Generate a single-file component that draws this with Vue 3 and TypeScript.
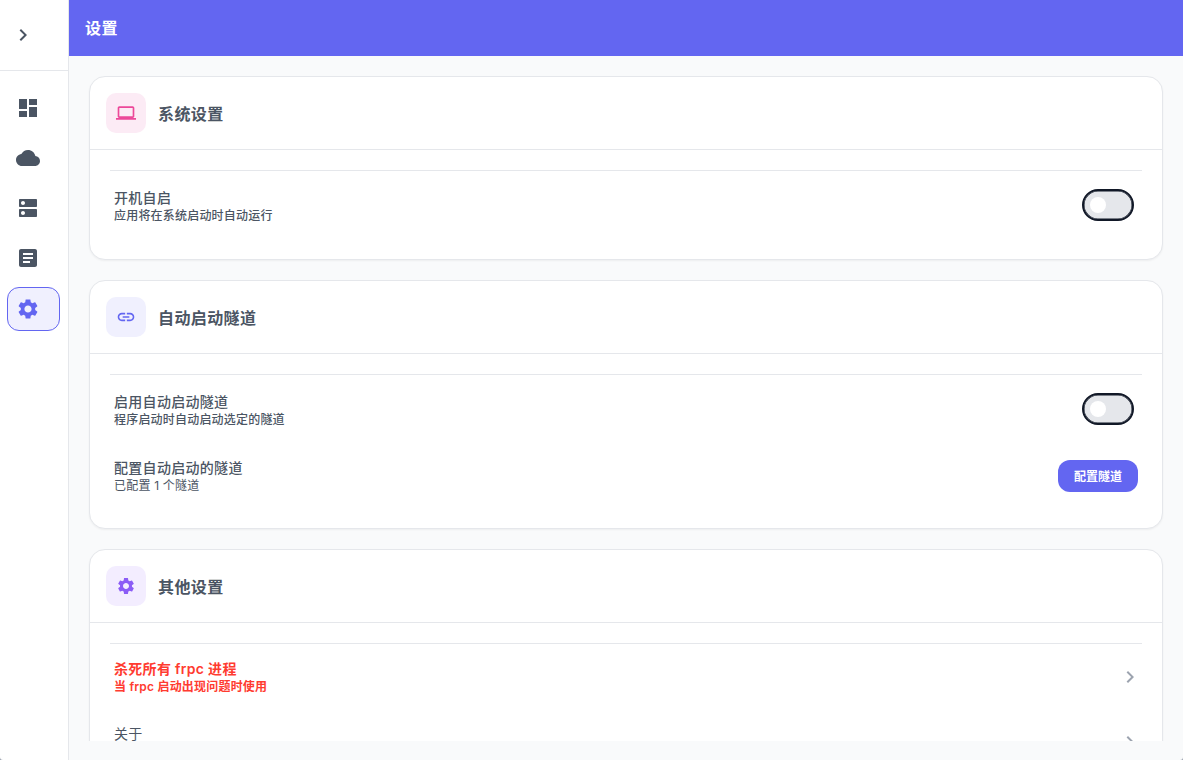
<template>
  <div class="app">
    <aside class="sidebar">
      <div class="side-top">
        <button class="collapse">
          <svg class="icon" viewBox="0 0 24 24"><path :d="icons.chevron" /></svg>
        </button>
      </div>
      <nav class="nav">
        <a
          v-for="item in navItems"
          :key="item.name"
          :class="['nav-item', { active: item.name === 'settings' }]"
        >
          <svg class="icon" viewBox="0 0 24 24"><path :d="item.path" /></svg>
        </a>
      </nav>
    </aside>

    <main class="main">
      <header class="topbar">设置</header>
      <div class="scroller">
        <section class="card">
          <div class="card-head">
            <span class="badge pink">
              <svg viewBox="0 0 24 24"><path :d="icons.laptop" /></svg>
            </span>
            <h2>系统设置</h2>
          </div>
          <div class="card-body">
            <div class="list">
              <div class="row">
                <div class="label">
                  <span class="title">开机自启</span>
                  <span class="desc strong">应用将在系统启动时自动运行</span>
                </div>
                <span class="toggle"><i></i></span>
              </div>
            </div>
          </div>
        </section>

        <section class="card">
          <div class="card-head">
            <span class="badge indigo">
              <svg viewBox="0 0 24 24"><path :d="icons.link" /></svg>
            </span>
            <h2>自动启动隧道</h2>
          </div>
          <div class="card-body">
            <div class="list">
              <div class="row">
                <div class="label">
                  <span class="title">启用自动启动隧道</span>
                  <span class="desc strong">程序启动时自动启动选定的隧道</span>
                </div>
                <span class="toggle"><i></i></span>
              </div>
              <div class="row slim">
                <div class="label">
                  <span class="title">配置自动启动的隧道</span>
                  <span class="desc">已配置 {{ tunnelCount }} 个隧道</span>
                </div>
                <button class="primary">配置隧道</button>
              </div>
            </div>
          </div>
        </section>

        <section class="card">
          <div class="card-head">
            <span class="badge purple">
              <svg viewBox="0 0 24 24"><path :d="icons.gear" /></svg>
            </span>
            <h2>其他设置</h2>
          </div>
          <div class="card-body">
            <div class="list">
              <div class="row slim danger">
                <div class="label">
                  <span class="title">杀死所有 frpc 进程</span>
                  <span class="desc strong">当 frpc 启动出现问题时使用</span>
                </div>
                <svg class="arrow" viewBox="0 0 24 24"><path :d="icons.chevron" /></svg>
              </div>
              <div class="row slim">
                <div class="label">
                  <span class="title plain">关于</span>
                  <span class="desc"></span>
                </div>
                <svg class="arrow" viewBox="0 0 24 24"><path :d="icons.chevron" /></svg>
              </div>
            </div>
          </div>
        </section>
      </div>
    </main>
  </div>
</template>

<script setup lang="ts">
const icons = {
  chevron: "M10 6L8.59 7.41 13.17 12l-4.58 4.59L10 18l6-6z",
  dashboard: "M3 13h8V3H3v10zm0 8h8v-6H3v6zm10 0h8V11h-8v10zm0-18v6h8V3h-8z",
  cloud:
    "M19.35 10.04C18.67 6.59 15.64 4 12 4 9.11 4 6.6 5.64 5.35 8.04 2.34 8.36 0 10.91 0 14c0 3.31 2.69 6 6 6h13c2.76 0 5-2.24 5-5 0-2.64-2.05-4.78-4.65-4.96z",
  dns: "M20 13H4c-.55 0-1 .45-1 1v6c0 .55.45 1 1 1h16c.55 0 1-.45 1-1v-6c0-.55-.45-1-1-1zM7 19c-1.1 0-2-.9-2-2s.9-2 2-2 2 .9 2 2-.9 2-2 2zM20 3H4c-.55 0-1 .45-1 1v6c0 .55.45 1 1 1h16c.55 0 1-.45 1-1V4c0-.55-.45-1-1-1zM7 9c-1.1 0-2-.9-2-2s.9-2 2-2 2 .9 2 2-.9 2-2 2z",
  article:
    "M19 3H5c-1.1 0-2 .9-2 2v14c0 1.1.9 2 2 2h14c1.1 0 2-.9 2-2V5c0-1.1-.9-2-2-2zm-5 14H7v-2h7v2zm3-4H7v-2h10v2zm0-4H7V7h10v2z",
  gear: "M19.14 12.94c.04-.3.06-.61.06-.94 0-.32-.02-.64-.07-.94l2.03-1.58c.18-.14.23-.41.12-.61l-1.92-3.32c-.12-.22-.37-.29-.59-.22l-2.39.96c-.5-.38-1.03-.7-1.62-.94l-.36-2.54c-.04-.24-.24-.41-.48-.41h-3.84c-.24 0-.43.17-.47.41l-.36 2.54c-.59.24-1.13.57-1.62.94l-2.39-.96c-.22-.08-.47 0-.59.22L2.74 8.87c-.12.21-.08.47.12.61l2.03 1.58c-.05.3-.09.63-.09.94s.02.64.07.94l-2.03 1.58c-.18.14-.23.41-.12.61l1.92 3.32c.12.22.37.29.59.22l2.39-.96c.5.38 1.03.7 1.62.94l.36 2.54c.05.24.24.41.48.41h3.84c.24 0 .44-.17.47-.41l.36-2.54c.59-.24 1.13-.56 1.62-.94l2.39.96c.22.08.47 0 .59-.22l1.92-3.32c.12-.22.07-.47-.12-.61l-2.01-1.58zM12 15.6c-1.98 0-3.6-1.62-3.6-3.6s1.62-3.6 3.6-3.6 3.6 1.62 3.6 3.6-1.62 3.6-3.6 3.6z",
  laptop:
    "M20 18c1.1 0 1.99-.9 1.99-2L22 6c0-1.1-.9-2-2-2H4c-1.1 0-2 .9-2 2v10c0 1.1.9 2 2 2H0v2h24v-2h-4zM4 6h16v10H4V6z",
  link: "M3.9 12c0-1.71 1.39-3.1 3.1-3.1h4V7H7c-2.76 0-5 2.24-5 5s2.24 5 5 5h4v-1.9H7c-1.71 0-3.1-1.39-3.1-3.1zM8 13h8v-2H8v2zm9-6h-4v1.9h4c1.71 0 3.1 1.39 3.1 3.1s-1.39 3.1-3.1 3.1h-4V17h4c2.76 0 5-2.24 5-5s-2.24-5-5-5z",
};

const navItems = [
  { name: "dashboard", path: icons.dashboard },
  { name: "cloud", path: icons.cloud },
  { name: "servers", path: icons.dns },
  { name: "logs", path: icons.article },
  { name: "settings", path: icons.gear },
];

const tunnelCount = 1;
</script>

<style>
html,
body {
  margin: 0;
  background: #9ca3af;
}
</style>

<style scoped>
.app {
  display: flex;
  width: 1183px;
  height: 760px;
  overflow: hidden;
  border-radius: 0 0 3px 3px;
  font-family: Inter, "Noto Sans CJK SC", sans-serif;
  letter-spacing: 0.025em;
  color: #4b5563;
}
.sidebar {
  width: 68px;
  flex-shrink: 0;
  background: #fff;
  border-right: 1px solid #e5e7eb;
}
.side-top {
  height: 70px;
  border-bottom: 1px solid #e5e7eb;
  display: flex;
  align-items: center;
}
.collapse {
  margin-left: 11px;
  padding: 0;
  border: 0;
  background: none;
  display: flex;
}
.icon {
  width: 24px;
  height: 24px;
  fill: #4b5563;
}
.nav {
  padding: 15px 8px 0 7px;
  display: flex;
  flex-direction: column;
  gap: 6px;
}
.nav-item {
  height: 44px;
  box-sizing: border-box;
  border: 1px solid transparent;
  border-radius: 12px;
  display: flex;
  align-items: center;
  padding-left: 8px;
}
.nav-item.active {
  margin-top: 1px;
  background: #f0f0fe;
  border-color: #6366f1;
}
.nav-item.active .icon {
  fill: #6366f1;
}
.main {
  flex: 1;
  min-width: 0;
  display: flex;
  flex-direction: column;
  background: #f9fafb;
}
.topbar {
  height: 56px;
  flex-shrink: 0;
  box-sizing: border-box;
  padding: 0 0 2px 16px;
  display: flex;
  align-items: center;
  background: #6366f1;
  color: #fff;
  font-size: 16px;
  font-weight: 600;
}
.scroller {
  height: 685px;
  overflow: hidden;
  padding: 20px 20px 0;
  box-sizing: border-box;
  display: flex;
  flex-direction: column;
  gap: 20px;
}
.card {
  flex-shrink: 0;
  background: #fff;
  border: 1px solid #e5e7eb;
  border-radius: 16px;
  box-shadow: 0 1px 2px rgba(0, 0, 0, 0.05);
}
.card-head {
  height: 72px;
  padding: 0 16px;
  display: flex;
  align-items: center;
  gap: 12px;
  border-bottom: 1px solid #e5e7eb;
}
.card-head h2 {
  margin: 0;
  font-size: 16px;
  font-weight: 600;
  color: #4b5563;
}
.badge {
  width: 40px;
  height: 40px;
  border-radius: 10px;
  display: flex;
  align-items: center;
  justify-content: center;
}
.badge svg {
  width: 20px;
  height: 20px;
}
.pink {
  background: #fcebf5;
  fill: #ec4899;
}
.indigo {
  background: #f0f0fe;
  fill: #6366f1;
}
.purple {
  background: #f3edff;
  fill: #8b5cf6;
}
.card-body {
  padding: 20px;
}
.list {
  border-top: 1px solid #e5e7eb;
}
.row {
  height: 68px;
  box-sizing: border-box;
  padding: 2px 4px 0;
  display: flex;
  align-items: center;
  justify-content: space-between;
}
.row.slim {
  height: 65px;
  padding-top: 0;
}
.label {
  display: flex;
  flex-direction: column;
}
.title {
  font-size: 14px;
  line-height: 20px;
  font-weight: 500;
  letter-spacing: 0.3px;
}
.title.plain {
  font-weight: 400;
}
.desc {
  font-size: 12px;
  line-height: 16px;
  min-height: 16px;
  letter-spacing: 0.2px;
}
.desc.strong {
  font-weight: 500;
}
.danger {
  color: #ff3b30;
}
.danger .title,
.danger .desc {
  font-weight: 600;
}
.toggle {
  width: 52px;
  height: 32px;
  box-sizing: border-box;
  margin: -2px 4px 0 0;
  border: 2px solid #111827;
  border-radius: 16px;
  background: #e5e7eb;
  box-shadow: inset 0 0 0 0.5px #111827;
  display: flex;
  align-items: center;
  padding-left: 6px;
}
.toggle i {
  width: 16px;
  height: 16px;
  border-radius: 50%;
  background: #fff;
}
.primary {
  width: 80px;
  height: 32px;
  padding: 0;
  border: 0;
  border-radius: 12px;
  background: #6366f1;
  color: #fff;
  font: 600 12px Inter, "Noto Sans CJK SC", sans-serif;
}
.arrow {
  width: 24px;
  height: 24px;
  margin-right: -4px;
  fill: #9ca3af;
}
</style>
